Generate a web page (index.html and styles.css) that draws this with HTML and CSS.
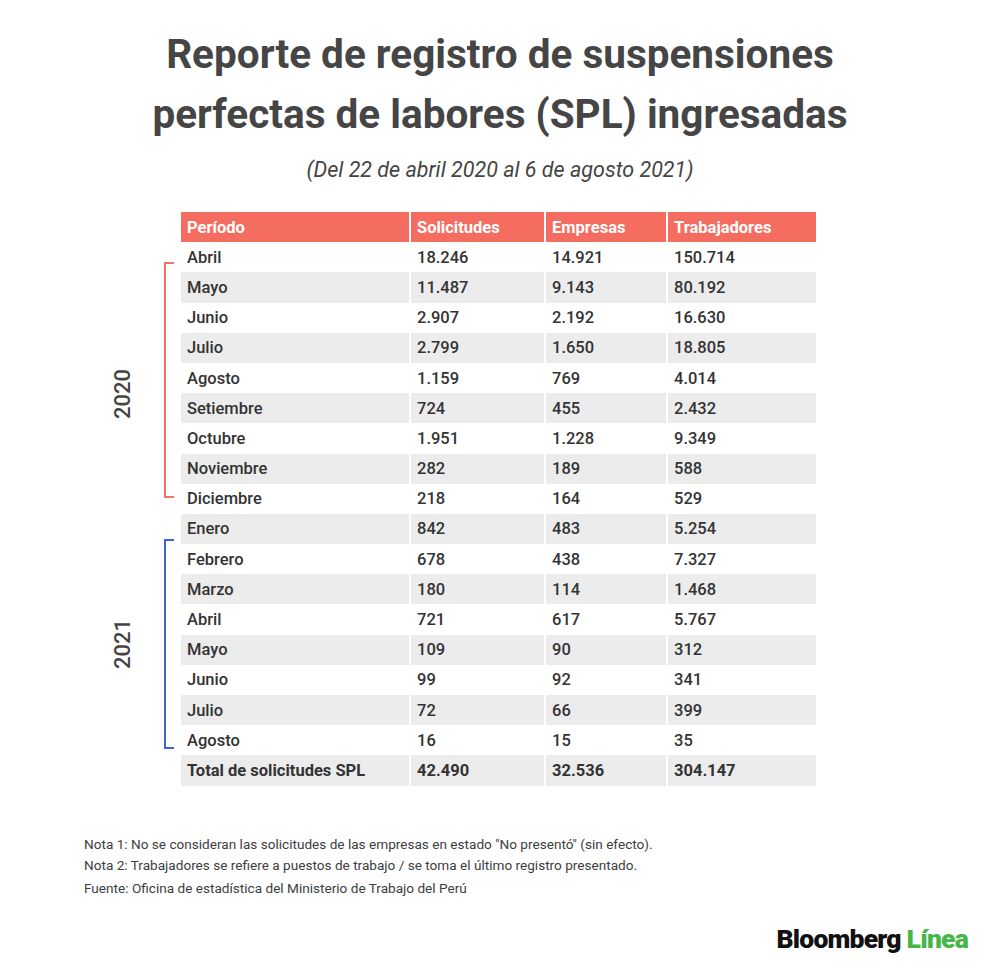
FILE: index.html
```html
<!DOCTYPE html>
<html lang="es">
<head>
<meta charset="utf-8">
<link rel="stylesheet" href="styles.css">
</head>
<body>
<div class="page">
  <h1 class="title">Reporte de registro de suspensiones<br>perfectas de labores (SPL) ingresadas</h1>
  <p class="subtitle">(Del 22 de abril 2020 al 6 de agosto 2021)</p>

  <div class="table-row">
    <div class="side">
      <div class="group g2020">
        <div class="year">2020</div>
        <div class="bracket red"></div>
      </div>
      <div class="group g2021">
        <div class="year">2021</div>
        <div class="bracket blue"></div>
      </div>
    </div>
    <table class="data">
      <thead>
        <tr><th class="c1">Período</th><th class="c2">Solicitudes</th><th class="c3">Empresas</th><th class="c4">Trabajadores</th></tr>
      </thead>
      <tbody>
        <tr><td>Abril</td><td>18.246</td><td>14.921</td><td>150.714</td></tr>
        <tr><td>Mayo</td><td>11.487</td><td>9.143</td><td>80.192</td></tr>
        <tr><td>Junio</td><td>2.907</td><td>2.192</td><td>16.630</td></tr>
        <tr><td>Julio</td><td>2.799</td><td>1.650</td><td>18.805</td></tr>
        <tr><td>Agosto</td><td>1.159</td><td>769</td><td>4.014</td></tr>
        <tr><td>Setiembre</td><td>724</td><td>455</td><td>2.432</td></tr>
        <tr><td>Octubre</td><td>1.951</td><td>1.228</td><td>9.349</td></tr>
        <tr><td>Noviembre</td><td>282</td><td>189</td><td>588</td></tr>
        <tr><td>Diciembre</td><td>218</td><td>164</td><td>529</td></tr>
        <tr><td>Enero</td><td>842</td><td>483</td><td>5.254</td></tr>
        <tr><td>Febrero</td><td>678</td><td>438</td><td>7.327</td></tr>
        <tr><td>Marzo</td><td>180</td><td>114</td><td>1.468</td></tr>
        <tr><td>Abril</td><td>721</td><td>617</td><td>5.767</td></tr>
        <tr><td>Mayo</td><td>109</td><td>90</td><td>312</td></tr>
        <tr><td>Junio</td><td>99</td><td>92</td><td>341</td></tr>
        <tr><td>Julio</td><td>72</td><td>66</td><td>399</td></tr>
        <tr><td>Agosto</td><td>16</td><td>15</td><td>35</td></tr>
        <tr class="total"><td>Total de solicitudes SPL</td><td>42.490</td><td>32.536</td><td>304.147</td></tr>
      </tbody>
    </table>
  </div>

  <div class="notes">
    <p class="note">Nota 1: No se consideran las solicitudes de las empresas en estado "No presentó" (sin efecto).</p>
    <p class="note">Nota 2: Trabajadores se refiere a puestos de trabajo / se toma el último registro presentado.</p>
    <p class="note source">Fuente: Oficina de estadística del Ministerio de Trabajo del Perú</p>
  </div>

  <div class="logo"><span class="logo-b">Bloomberg</span> <span class="logo-l">Línea</span></div>
</div>
</body>
</html>
```

FILE: styles.css
```css
* { box-sizing: border-box; }
html, body { margin: 0; padding: 0; background: #ffffff; }
body {
  font-family: Roboto, "Liberation Sans", Arial, sans-serif;
  color: #3d3d3d;
}
.page {
  width: 1000px;
  height: 969px;
  display: flex;
  flex-direction: column;
  padding-top: 24px;
}
.title {
  margin: 0;
  text-align: center;
  font-size: 40.5px;
  line-height: 60px;
  font-weight: 700;
  color: #454545;
}
.subtitle {
  margin: 14px 0 0;
  text-align: center;
  font-style: italic;
  font-size: 21.5px;
  line-height: 24px;
  color: #454545;
}
.table-row {
  display: flex;
  margin-top: 30px;
  padding-left: 110px;
}
.side {
  width: 71px;
  display: flex;
  flex-direction: column;
  padding-top: 50px;
}
.group {
  display: flex;
  align-items: center;
}
.g2020 { height: 236px; }
.g2021 { height: 210px; margin-top: 41px; }
.year {
  width: 44px;
  display: flex;
  justify-content: center;
  font-size: 22px;
  font-weight: 500;
  color: #454545;
  writing-mode: vertical-rl;
  transform: rotate(180deg);
}
.g2020 .year { margin-top: 28px; }
.bracket {
  width: 10px;
  height: 100%;
  margin-left: 10px;
  border: 2px solid;
  border-right: none;
}
.bracket.red { border-color: #ee7268; }
.bracket.blue { border-color: #3d66cf; }

.data {
  border-collapse: separate;
  border-spacing: 2px 0;
  margin-left: -2px;
  font-size: 16.5px;
}
.data th, .data td {
  height: 30.2px;
  padding: 0 5px 0 6px;
  text-align: left;
  vertical-align: middle;
  white-space: nowrap;
}
.data th {
  background: #f46d60;
  color: #ffffff;
  font-weight: 700;
}
.c1 { width: 228px; }
.c2 { width: 133px; }
.c3 { width: 120px; }
.c4 { width: 148px; }
.data td {
  color: #333333;
  font-weight: 500;
}
.data tbody tr:nth-child(even) td { background: #ececec; }
.data tr.total td { font-weight: 700; }

.notes {
  margin-top: 48px;
  padding-left: 84px;
}
.note {
  margin: 0;
  font-size: 13.6px;
  line-height: 21px;
  color: #3d3d3d;
}
.note.source { margin-top: 2px; }
.logo {
  margin-top: 24px;
  align-self: flex-end;
  margin-right: 32px;
  font-size: 26.5px;
  font-weight: 900;
  letter-spacing: -0.8px;
}
.logo-b { color: #111111; }
.logo-l { color: #47b648; }
```
